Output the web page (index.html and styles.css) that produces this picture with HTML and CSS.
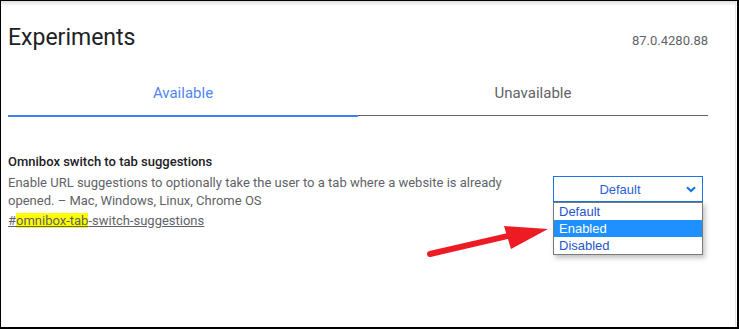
FILE: index.html
```html
<!DOCTYPE html>
<html lang="en">
<head>
    <meta charset="UTF-8">
    <title>Experiments</title>
    <link rel="stylesheet" href="styles.css">
</head>
<body>
    <div class="window">
        <div class="page">
            <header class="head">
                <h1>Experiments</h1>
                <span class="version">87.0.4280.88</span>
            </header>
            <nav class="tabs">
                <div class="tab active">Available</div>
                <div class="tab">Unavailable</div>
            </nav>
            <section class="experiment">
                <div class="info">
                    <h2>Omnibox switch to tab suggestions</h2>
                    <p>Enable URL suggestions to optionally take the user to a tab where a website is already opened. – Mac, Windows, Linux, Chrome OS</p>
                    <a href="#omnibox-tab-switch-suggestions">#<mark>omnibox-tab</mark>-switch-suggestions</a>
                </div>
                <div class="control">
                    <div class="select">
                        <span>Default</span>
                        <svg class="chevron" width="10" height="7" viewBox="0 0 10 7">
                            <path d="M1 1.2 L5 5 L9 1.2" fill="none" stroke="#1a73e8" stroke-width="2.2"/>
                        </svg>
                    </div>
                    <ul class="dropdown">
                        <li>Default</li>
                        <li class="selected">Enabled</li>
                        <li>Disabled</li>
                    </ul>
                </div>
            </section>
        </div>
        <!-- red annotation arrow -->
        <svg class="arrow" width="739" height="329" viewBox="0 0 739 329">
            <line x1="430" y1="254" x2="512" y2="235" stroke="#ed1c24" stroke-width="6" stroke-linecap="round"/>
            <polygon points="504,226 548,229 511,249" fill="#ed1c24"/>
        </svg>
    </div>
</body>
</html>
```

FILE: styles.css
```css
body {
    margin: 0;
    font-family: Roboto, "Liberation Sans", sans-serif;
    background-color: #fff;
}

.window {
    position: relative;
    width: 739px;
    height: 329px;
    box-sizing: border-box;
    border: 1px solid #000;
    border-right-width: 2px;
    border-bottom-width: 2px;
    overflow: hidden;
}

.page {
    height: 100%;
    margin-right: 1px;
    padding: 0 27px 0 7px;
    border-right: 1px solid #e4e4e4;
    background: linear-gradient(#dedede, #fff 5px);
}

.head {
    display: flex;
    justify-content: space-between;
    align-items: baseline;
    padding-top: 23px;
}

.head h1 {
    margin: 0;
    font-size: 23px;
    font-weight: 400;
    line-height: 28px;
    color: #202124;
}

.version {
    font-size: 13px;
    color: #5f6368;
}

.tabs {
    display: flex;
    align-items: flex-start;
    margin-top: 18px;
}

.tab {
    flex: 1;
    height: 45px;
    line-height: 46px;
    text-align: center;
    font-size: 15px;
    color: #5f6368;
    border-bottom: 1px solid #5f6368;
}

.tab.active {
    color: #4f86ef;
    border-bottom: 2px solid #3f83ea;
}

.experiment {
    display: flex;
    justify-content: space-between;
    align-items: flex-start;
    margin-top: 35px;
    padding-right: 5px;
}

.info {
    width: 520px;
}

.info h2 {
    margin: 0;
    font-size: 13px;
    font-weight: 500;
    line-height: 20px;
    color: #202124;
}

.info p {
    margin: 2px 0 0;
    font-size: 13px;
    line-height: 18px;
    color: #5f6368;
}

.info a {
    display: inline-block;
    margin-top: 1px;
    font-size: 13px;
    line-height: 18px;
    color: #5f6368;
}

.info mark {
    background-color: #ffff00;
    color: #5f6368;
}

.control {
    position: relative;
    width: 150px;
    margin-top: 24px;
}

.select {
    display: flex;
    align-items: center;
    height: 26px;
    box-sizing: border-box;
    padding: 0 6px 0 0;
    border: 1px solid #1a73e8;
    font-family: "Liberation Sans", Arial, sans-serif;
    font-size: 13px;
    color: #2a5fd6;
}

.select span {
    flex: 1;
    text-align: center;
    padding-top: 1px;
}

.dropdown {
    position: absolute;
    top: 100%;
    left: 0;
    right: 0;
    margin: 0;
    padding: 0;
    list-style: none;
    background-color: #fff;
    border: 1px solid #7a7a7a;
    box-shadow: 2px 3px 5px rgba(0, 0, 0, 0.25);
    font-family: "Liberation Sans", Arial, sans-serif;
    font-size: 13px;
    color: #1f55d0;
}

.dropdown li {
    height: 17px;
    line-height: 17px;
    padding-left: 5px;
}

.dropdown li.selected {
    background-color: #1e90ff;
    color: #fff;
}

.arrow {
    position: absolute;
    top: -1px;
    left: -1px;
    pointer-events: none;
}
```
